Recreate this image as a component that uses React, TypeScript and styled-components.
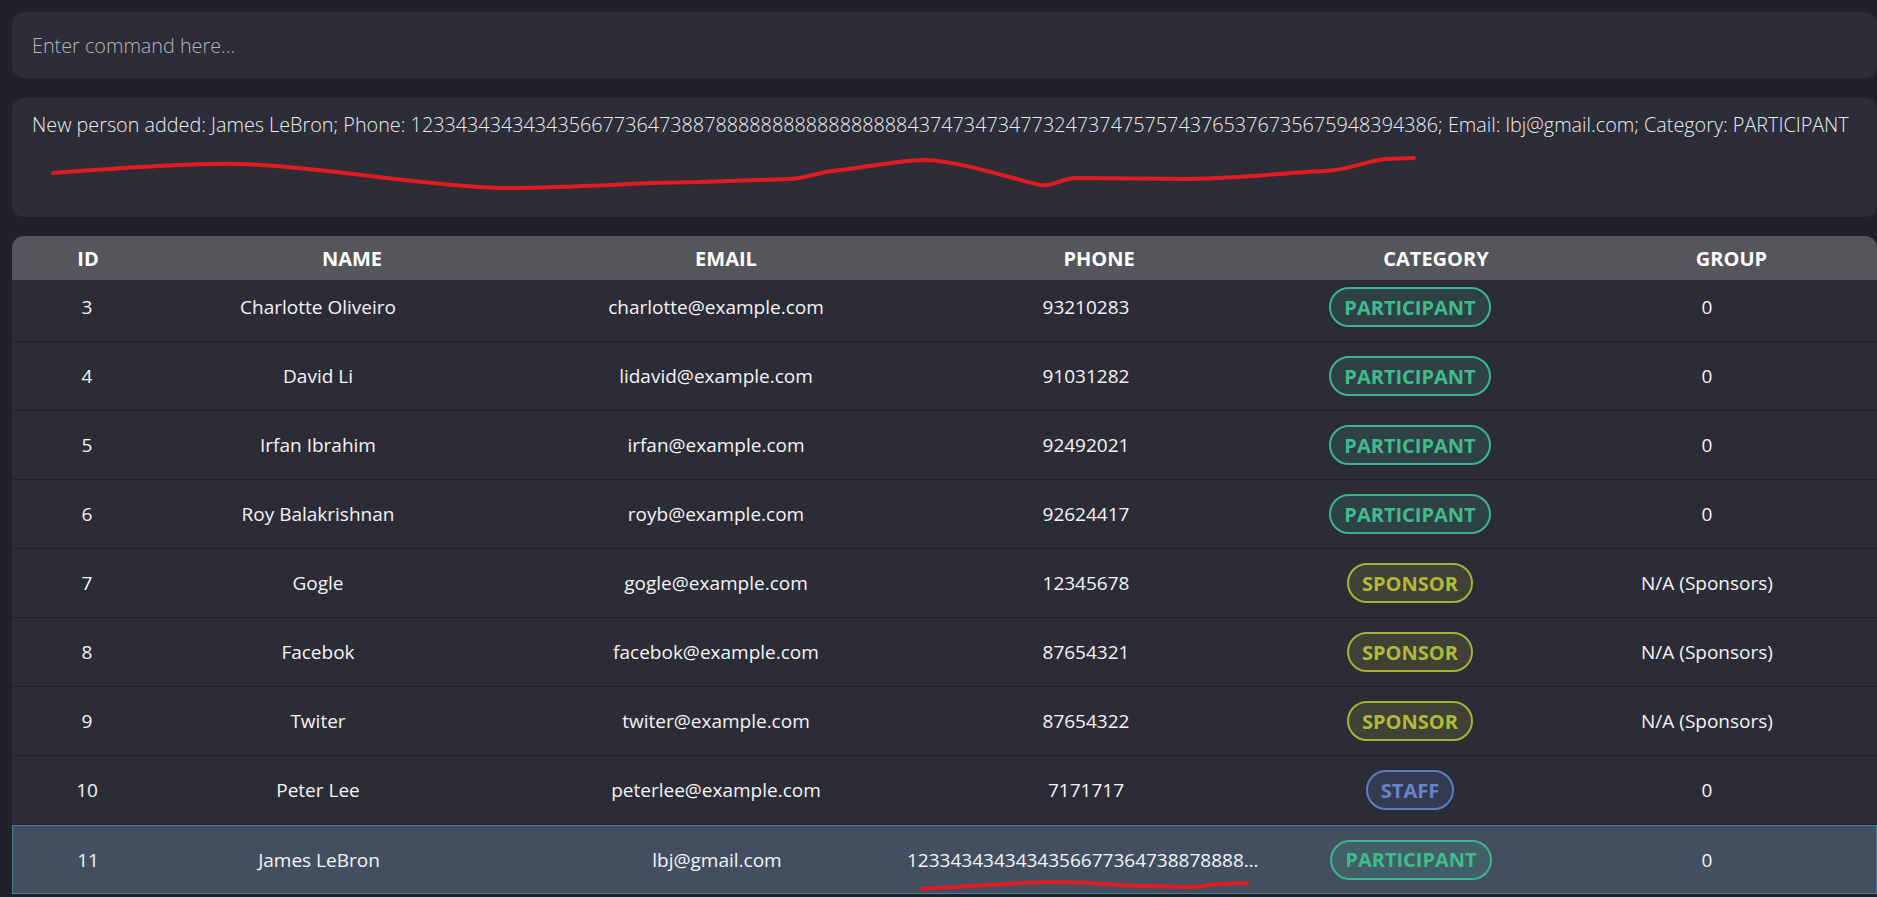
import { useEffect, useRef } from "react";
import styled, { createGlobalStyle, css } from "styled-components";

const GlobalStyle = createGlobalStyle`
  html, body {
    margin: 0;
    padding: 0;
    overflow: hidden;
    background-color: #21212a;
    font-family: "Open Sans", "Noto Sans", sans-serif;
  }
`;

type Category = "PARTICIPANT" | "SPONSOR" | "STAFF";

const badgeColors: Record<Category, { line: string; text: string; fill: string }> = {
  PARTICIPANT: { line: "#3db58a", text: "#3fbb8c", fill: "rgba(62, 182, 139, 0.16)" },
  SPONSOR: { line: "#a7b136", text: "#afba35", fill: "rgba(168, 178, 54, 0.16)" },
  STAFF: { line: "#5b7fc2", text: "#6584cb", fill: "rgba(91, 127, 194, 0.18)" },
};

const Page = styled.div`
  position: relative;
  height: 100vh;
  box-sizing: border-box;
  padding: 12px 0 3px 12px;
  display: flex;
  flex-direction: column;
  gap: 20px;
`;

const CommandInput = styled.input`
  flex-shrink: 0;
  box-sizing: border-box;
  width: 100%;
  height: 66px;
  padding: 0 20px;
  border: 0;
  outline: none;
  border-radius: 12px;
  background-color: #2d2d38;
  color: #e8e8ee;
  font-family: inherit;
  font-size: 19.8px;
  font-weight: 300;

  &::placeholder {
    color: #b3b3bc;
  }
`;

const ResultBox = styled.div`
  flex-shrink: 0;
  box-sizing: border-box;
  height: 119px;
  margin-bottom: -1px;
  padding: 13px 20px;
  border-radius: 12px;
  background-color: #2d2d38;
  color: #e9ecf2;
  font-size: 19.8px;
  font-weight: 300;
  line-height: 28px;
  white-space: nowrap;
  overflow: hidden;
`;

const TablePanel = styled.div`
  flex: 1;
  min-height: 0;
  display: flex;
  flex-direction: column;
  border-radius: 12px 12px 0 0;
  background-color: #2c2c37;
  overflow: hidden;
`;

const HeaderRow = styled.div`
  flex-shrink: 0;
  display: grid;
  grid-template-columns: 152px 376px 372px 374px 300px 1fr;
  align-items: center;
  height: 44px;
  background-color: #55565c;
  color: #ffffff;
  font-size: 20px;
  font-weight: 700;
  text-align: center;
`;

const Body = styled.div`
  flex: 1;
  min-height: 0;
  overflow-y: scroll;

  &::-webkit-scrollbar {
    width: 12px;
  }
  &::-webkit-scrollbar-track {
    background-color: #24242c;
  }
  &::-webkit-scrollbar-thumb {
    background-color: #3e3f48;
    border-left: 5px solid transparent;
    background-clip: padding-box;
  }
`;

const Row = styled.div<{ $selected?: boolean }>`
  display: grid;
  grid-template-columns: 150px 312px 484px 256px 392px 1fr;
  padding-right: 69px;
  height: 69px;
  box-sizing: border-box;
  border-bottom: 1px solid #20202a;
  color: #f4f4f7;
  font-size: 19px;

  ${({ $selected }) =>
    $selected &&
    css`
      background-color: #434f61;
      border: 1px solid #4b8195;
    `}
`;

const Cell = styled.div`
  display: flex;
  justify-content: center;
  align-items: center;
  min-width: 0;
  white-space: nowrap;
`;

const PhoneText = styled.span`
  flex-shrink: 0;
  max-width: 360px;
  overflow: hidden;
  text-overflow: ellipsis;
  white-space: nowrap;
`;

const Badge = styled.span<{ $kind: Category }>`
  box-sizing: border-box;
  height: 40px;
  padding: 0 13px;
  display: inline-flex;
  align-items: center;
  border-radius: 20px;
  border: 2px solid ${({ $kind }) => badgeColors[$kind].line};
  background-color: ${({ $kind }) => badgeColors[$kind].fill};
  color: ${({ $kind }) => badgeColors[$kind].text};
  font-size: 20px;
  font-weight: 700;
`;

const Scribbles = styled.svg`
  position: absolute;
  top: 0;
  left: 0;
  width: 100%;
  height: 100%;
  pointer-events: none;
`;

const longPhone =
  "12334343434343566773647388788888888888888888437473473477324737475757437653767356759483943" + "86";

type Person = {
  id: number;
  name: string;
  email: string;
  phone: string;
  category: Category;
  group: string;
};

const people: Person[] = [
  { id: 1, name: "Alex Yeoh", email: "alexyeoh@example.com", phone: "87438807", category: "PARTICIPANT", group: "0" },
  { id: 2, name: "Bernice Yu", email: "berniceyu@example.com", phone: "99272758", category: "PARTICIPANT", group: "0" },
  { id: 3, name: "Charlotte Oliveiro", email: "charlotte@example.com", phone: "93210283", category: "PARTICIPANT", group: "0" },
  { id: 4, name: "David Li", email: "lidavid@example.com", phone: "91031282", category: "PARTICIPANT", group: "0" },
  { id: 5, name: "Irfan Ibrahim", email: "irfan@example.com", phone: "92492021", category: "PARTICIPANT", group: "0" },
  { id: 6, name: "Roy Balakrishnan", email: "royb@example.com", phone: "92624417", category: "PARTICIPANT", group: "0" },
  { id: 7, name: "Gogle", email: "gogle@example.com", phone: "12345678", category: "SPONSOR", group: "N/A (Sponsors)" },
  { id: 8, name: "Facebok", email: "facebok@example.com", phone: "87654321", category: "SPONSOR", group: "N/A (Sponsors)" },
  { id: 9, name: "Twiter", email: "twiter@example.com", phone: "87654322", category: "SPONSOR", group: "N/A (Sponsors)" },
  { id: 10, name: "Peter Lee", email: "peterlee@example.com", phone: "7171717", category: "STAFF", group: "0" },
  { id: 11, name: "James LeBron", email: "lbj@gmail.com", phone: longPhone, category: "PARTICIPANT", group: "0" },
];

const columns = ["ID", "NAME", "EMAIL", "PHONE", "CATEGORY", "GROUP"];

const App = () => {
  const bodyRef = useRef<HTMLDivElement>(null);

  // newest person is selected, so the list sits scrolled to the bottom
  useEffect(() => {
    if (bodyRef.current) bodyRef.current.scrollTop = bodyRef.current.scrollHeight;
  }, []);

  return (
    <>
      <GlobalStyle />
      <Page>
        <CommandInput placeholder="Enter command here..." />
        <ResultBox>
          New person added: James LeBron; Phone: {longPhone}; Email: lbj@gmail.com; Category: PARTICIPANT
        </ResultBox>
        <TablePanel>
          <HeaderRow>
            {columns.map((c) => (
              <span key={c}>{c}</span>
            ))}
          </HeaderRow>
          <Body ref={bodyRef}>
            {people.map((p) => (
              <Row key={p.id} $selected={p.id === 11}>
                <Cell>{p.id}</Cell>
                <Cell>{p.name}</Cell>
                <Cell>{p.email}</Cell>
                <Cell>
                  <PhoneText>{p.phone}</PhoneText>
                </Cell>
                <Cell>
                  <Badge $kind={p.category}>{p.category}</Badge>
                </Cell>
                <Cell>{p.group}</Cell>
              </Row>
            ))}
          </Body>
        </TablePanel>
        <Scribbles viewBox="0 0 1877 897" preserveAspectRatio="none">
          <g fill="none" stroke="#e01b22" strokeWidth={4} strokeLinecap="round" strokeLinejoin="round">
            <path d="M53 173 C 120 168, 200 163, 240 164 C 320 166, 420 186, 500 188 C 580 188, 640 182, 700 182 L 790 179 C 810 178, 815 172, 840 170 C 870 167, 900 160, 925 160 C 960 161, 1010 178, 1040 185 C 1052 187, 1060 179, 1075 178 L 1190 179 C 1250 178, 1290 172, 1325 171 C 1350 170, 1365 161, 1385 159 L 1414 158" />
            <path d="M922 889 C 960 887, 1020 882, 1057 882 C 1090 882, 1120 886, 1146 886 L 1190 887 C 1205 887, 1210 884, 1220 884 L 1247 883" />
          </g>
        </Scribbles>
      </Page>
    </>
  );
};

export default App;
